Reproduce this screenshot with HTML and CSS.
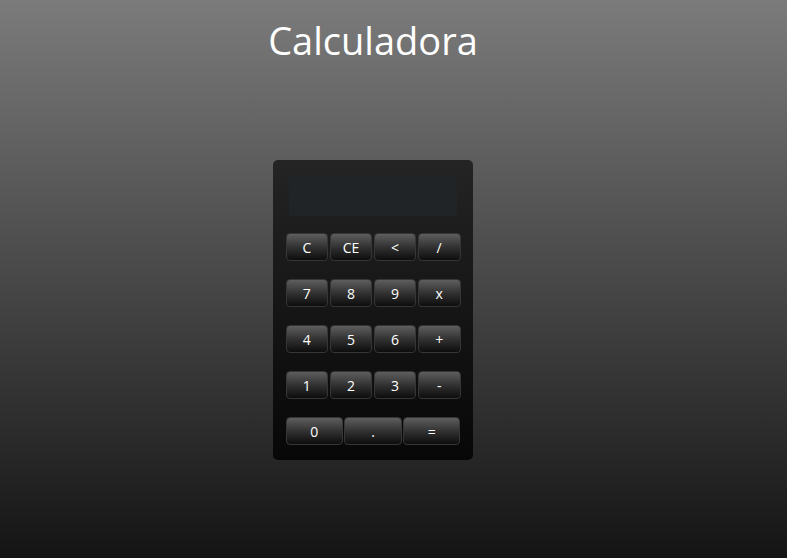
FILE: index.html
```html
<!DOCTYPE html>
<html lang="es">
<head>
<meta charset="utf-8">
<title>Calculadora</title>
<link rel="stylesheet" href="styles.css">
</head>
<body>
<div class="page">
  <h1 class="title">Calculadora</h1>
  <div class="calc">
    <div class="display"></div>
    <div class="row">
      <button class="key">C</button>
      <button class="key">CE</button>
      <button class="key">&lt;</button>
      <button class="key">/</button>
    </div>
    <div class="row">
      <button class="key">7</button>
      <button class="key">8</button>
      <button class="key">9</button>
      <button class="key">x</button>
    </div>
    <div class="row">
      <button class="key">4</button>
      <button class="key">5</button>
      <button class="key">6</button>
      <button class="key">+</button>
    </div>
    <div class="row">
      <button class="key">1</button>
      <button class="key">2</button>
      <button class="key">3</button>
      <button class="key">-</button>
    </div>
    <div class="row row-3">
      <button class="key">0</button>
      <button class="key">.</button>
      <button class="key">=</button>
    </div>
  </div>
</div>
</body>
</html>
```

FILE: styles.css
```css
html, body {
  margin: 0;
  padding: 0;
  height: 100%;
}
body {
  background: linear-gradient(#7b7b7b 0%, #141414 100%);
  font-family: "Open Sans", "Noto Sans", sans-serif;
  color: #fff;
}
.page {
  width: 746px;
  display: flex;
  flex-direction: column;
  align-items: center;
}
.title {
  margin: 15px 0 0 0;
  font-weight: 400;
  font-size: 38px;
  line-height: 50px;
  color: #fff;
}
.calc {
  margin-top: 95px;
  width: 200px;
  height: 300px;
  box-sizing: border-box;
  border-radius: 5px;
  background: linear-gradient(#242424 0%, #070707 100%);
  padding: 17px 12px 0 12px;
  display: flex;
  flex-direction: column;
}
.display {
  height: 39px;
  margin: 0 4px;
  background: #212427;
  border-radius: 2px;
}
.row {
  display: grid;
  grid-template-columns: repeat(4, 1fr);
  column-gap: 1.5px;
  margin-top: 17px;
  padding: 0 0.5px;
}
.row + .row {
  margin-top: 18px;
}
.row-3 {
  grid-template-columns: repeat(3, 1fr);
}
.key {
  height: 28px;
  margin: 0;
  padding: 2px 0 0 0;
  box-sizing: border-box;
  border: 1px solid #363636;
  border-radius: 4px;
  background: linear-gradient(#5e5e5e 0%, #2e2e2e 55%, #0d0d0d 100%);
  color: #fff;
  font-family: "Open Sans", "Noto Sans", sans-serif;
  font-size: 14px;
  line-height: 24px;
  text-align: center;
}
```
